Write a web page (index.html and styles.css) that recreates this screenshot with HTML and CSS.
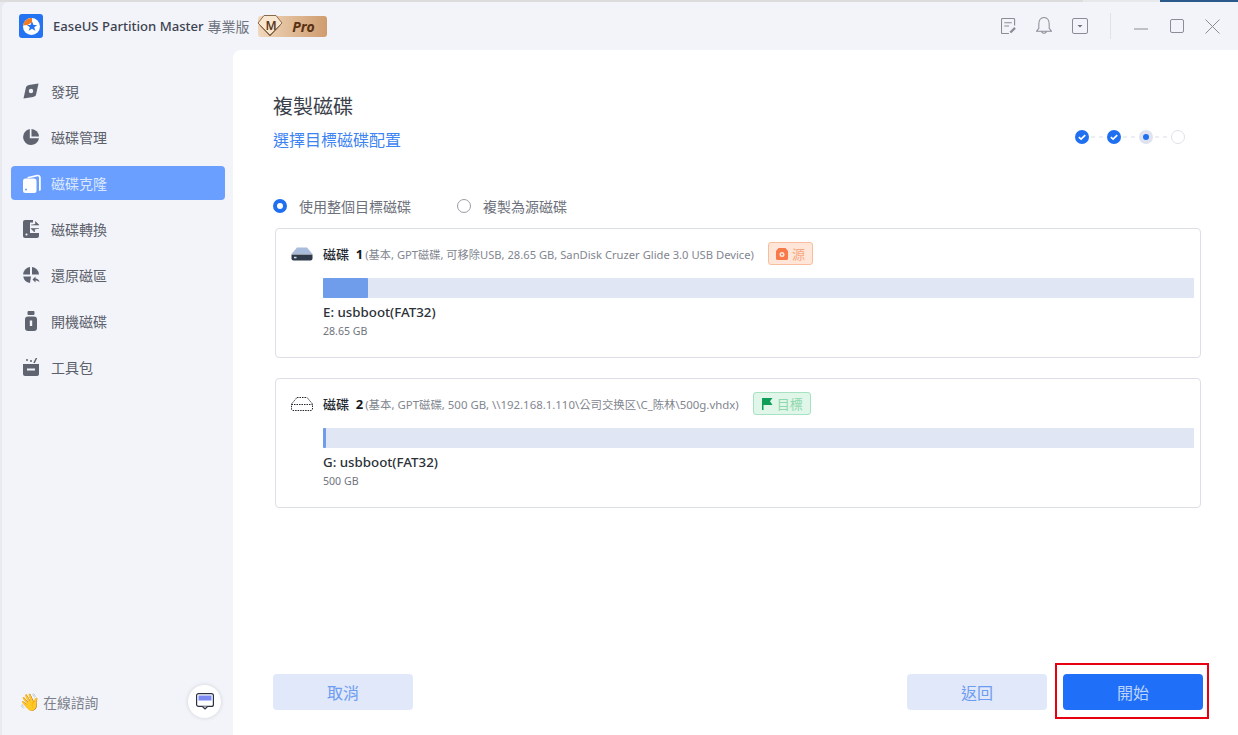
FILE: index.html
```html
<!DOCTYPE html>
<html lang="zh-Hant">
<head>
<meta charset="utf-8">
<title>EaseUS Partition Master</title>
<link rel="stylesheet" href="styles.css">
</head>
<body>
<div class="app">
  <div class="topstrip"><span class="strip-a"></span><span class="strip-b"></span><span class="strip-c"></span></div>
  <div class="shell">
  <header class="titlebar">
    <div class="brand">
      <svg class="logo" width="24" height="24" viewBox="0 0 24 24"><rect width="24" height="24" rx="3" fill="#2473f2"/><circle cx="12.500" cy="12.500" r="8.500" fill="#fff"/><path d="M13 4A8.500 8.500 0 0 0 4 11.500L8.500 11 13 8.500Z" fill="#f47b20"/><path d="M13 7.500l1.500 3.400h3.700l-3 2.300 1.100 3.600-3.300-2.100-3.300 2.100 1.100-3.600-3-2.300h3.700z" fill="#2473f2"/></svg>
      <span class="appname">EaseUS Partition Master</span>
      <span class="edition">專業版</span>
      <span class="pro">
        <svg class="pro-gem" width="26" height="24" viewBox="0 0 26 24"><path d="M7 2.500h12l6 7.500-12 12L1 10z" fill="#f8e6d0" stroke="#8a6a4c" stroke-width="1"/><path d="M3 12.500L13 23l10-10.500" fill="none" stroke="#8a6a4c" stroke-width="1"/></svg>
        <span class="pro-m">M</span>
        <span class="pro-text">Pro</span>
      </span>
    </div>
    <div class="winctl">
      <svg width="15" height="16" viewBox="0 0 16 17" fill="none" stroke="#8a8d96" stroke-width="1.200"><path d="M14.500 8V1.500a1 1 0 0 0-1-1h-12a1 1 0 0 0-1 1v14a1 1 0 0 0 1 1h7"/><path d="M3.500 5h8M3.500 8.500h5"/><path d="M10 15.500l5-5" stroke-width="2.400"/></svg>
      <svg class="bell" width="16" height="20" viewBox="0 0 17 20" fill="none" stroke="#8a8d96" stroke-width="1.100"><path d="M8.500 1C5 1 3 4 3 8v4.500L.6 15.500h15.800L14 12.500V8c0-4-2-7-5.500-7z"/><path d="M6 15.500c0 2.800 5 2.800 5 0"/></svg>
      <svg class="drop" width="16" height="16" viewBox="0 0 16 16"><rect x=".5" y=".5" width="15" height="15" rx="1.500" fill="none" stroke="#8a8d96"/><path d="M5.500 7h5L8 9.500z" fill="#70737c"/></svg>
      <span class="sep"></span>
      <svg class="min" width="14" height="2" viewBox="0 0 14 2"><path d="M0 1h14" stroke="#8a8d96" stroke-width="1"/></svg>
      <svg class="max" width="14" height="14" viewBox="0 0 14 14"><rect x=".5" y=".5" width="13" height="13" rx="1.500" fill="none" stroke="#8a8d96"/></svg>
      <svg class="close" width="15" height="15" viewBox="0 0 15 15"><path d="M.5.500l14 14M14.500.500l-14 14" stroke="#8a8d96" stroke-width="1"/></svg>
    </div>
  </header>
  <div class="body">
    <nav class="sidebar">
      <ul class="nav">
        <li class="nav-item">
          <svg class="nav-icon" width="16" height="16" viewBox="0 0 16 16"><path d="M15.500.500L6 2C4 2.400 3.300 3.300 2.800 5L.5 15.500 10 14c2-.4 2.700-1.300 3.200-3z" fill="#5f6470"/><circle cx="8" cy="8" r="2.200" fill="#f2f4f9"/></svg>
          <span>發現</span>
        </li>
        <li class="nav-item">
          <svg class="nav-icon" width="16" height="16" viewBox="0 0 16 16"><path d="M6.800.100V9.200H16A8 8 0 1 1 6.800.100z" fill="#5f6470"/><path d="M8.500 0A8 8 0 0 1 16 7.500H8.500z" fill="#5f6470"/></svg>
          <span>磁碟管理</span>
        </li>
        <li class="nav-item active">
          <svg class="nav-icon" width="18" height="19" viewBox="0 0 18 19"><rect y="4.500" width="13.500" height="14.500" rx="2.500" fill="#fff"/><path d="M4.500 3L14 .8c2-.4 3.800.8 3.800 2.700v12.700L16 17V4c0-1.300-.8-1.900-2-1.600L4.500 4.500z" fill="#fff"/><circle cx="3" cy="15.500" r="1" fill="#6b9fff"/></svg>
          <span>磁碟克隆</span>
        </li>
        <li class="nav-item">
          <svg class="nav-icon" width="16" height="18" viewBox="0 0 16 18"><path d="M2 0h8v2.500H7V13h9v3a2 2 0 0 1-2 2H2a2 2 0 0 1-2-2V2a2 2 0 0 1 2-2z" fill="#5f6470"/><path d="M8 5h8L12.500 1.500V4M16 8.500H8l3.500 3.500V9.500" fill="#5f6470" stroke="#5f6470" stroke-width=".6"/><circle cx="3.500" cy="14.500" r="1.100" fill="#f2f4f9"/></svg>
          <span>磁碟轉換</span>
        </li>
        <li class="nav-item">
          <svg class="nav-icon" width="17" height="16" viewBox="0 0 17 16"><path d="M7 0v7.500H.1A8 8 0 0 1 7 0z" fill="#5f6470"/><path d="M9 0a7.800 7.800 0 0 1 7 7.500H9z" fill="#5f6470"/><path d="M.2 9.500H8L7 16A8 8 0 0 1 .2 9.500z" fill="#5f6470"/><path d="M9.500 12.500l3-3v2c2 0 3.500 1 4 4-1-1.500-2.500-2-4-2v2z" fill="#5f6470"/></svg>
          <span>還原磁區</span>
        </li>
        <li class="nav-item">
          <svg class="nav-icon boot" width="12" height="20" viewBox="0 0 12 20"><rect x="2.500" width="7" height="4" rx="1" fill="#5f6470"/><rect y="5.500" width="12" height="14.500" rx="3" fill="#5f6470"/><rect x="4.800" y="9.500" width="2.400" height="5.500" fill="#f2f4f9"/></svg>
          <span>開機磁碟</span>
        </li>
        <li class="nav-item">
          <svg class="nav-icon" width="16" height="18" viewBox="0 0 16 18"><path d="M0 6h16v10a2 2 0 0 1-2 2H2a2 2 0 0 1-2-2z" fill="#5f6470"/><rect x="4" y="10.500" width="8" height="2" fill="#f2f4f9"/><path d="M11 5l2.500-5" stroke="#5f6470" stroke-width="1.500"/><circle cx="4" cy="2" r="1" fill="#5f6470"/><circle cx="8" cy="3" r="1" fill="#5f6470"/></svg>
          <span>工具包</span>
        </li>
      </ul>
      <div class="chat">
        <span class="wave">👋</span>
        <span class="chat-text">在線諮詢</span>
        <span class="chat-btn">
          <svg width="18" height="17" viewBox="0 0 18 17"><rect x=".6" y=".6" width="16.800" height="12.800" rx="2" fill="#fff" stroke="#2c3140" stroke-width="1.200"/><rect x="2.500" y="2.500" width="13" height="5" fill="#7d89f2"/><path d="M6.500 13.500L9 16l2.500-2.500" fill="#fff" stroke="#2c3140" stroke-width="1.200"/></svg>
        </span>
      </div>
    </nav>
    <main class="main">
      <h1 class="title">複製磁碟</h1>
      <div class="subrow">
        <span class="subtitle">選擇目標磁碟配置</span>
        <div class="steps">
          <span class="step done"><svg width="14" height="14" viewBox="0 0 14 14"><circle cx="7" cy="7" r="7" fill="#1f6ff0"/><path d="M3.800 7.200l2.300 2 4.100-4" fill="none" stroke="#fff" stroke-width="1.700"/></svg></span>
          <span class="dash"></span>
          <span class="step done"><svg width="14" height="14" viewBox="0 0 14 14"><circle cx="7" cy="7" r="7" fill="#1f6ff0"/><path d="M3.800 7.200l2.300 2 4.100-4" fill="none" stroke="#fff" stroke-width="1.700"/></svg></span>
          <span class="dash"></span>
          <span class="step"><svg width="14" height="14" viewBox="0 0 14 14"><circle cx="7" cy="7" r="7" fill="#dfe3ef"/><circle cx="7" cy="7" r="3" fill="#1f6ff0"/></svg></span>
          <span class="dash"></span>
          <span class="step"><svg width="14" height="14" viewBox="0 0 14 14"><circle cx="7" cy="7" r="6.500" fill="#fff" stroke="#dfe1e8"/></svg></span>
        </div>
      </div>
      <div class="options">
        <label class="option"><span class="radio on"></span><span>使用整個目標磁碟</span></label>
        <label class="option"><span class="radio"></span><span>複製為源磁碟</span></label>
      </div>
      <section class="disk">
        <div class="disk-head">
          <svg class="disk-icon" width="22" height="14" viewBox="0 0 22 14"><path d="M6 .500h10L21.500 7H.500z" fill="#a9bcdc"/><path d="M.500 7.500h21v4a2 2 0 0 1-2 2h-17a2 2 0 0 1-2-2z" fill="#2f3b4b"/><rect x="3" y="9.800" width="2.500" height="1.500" fill="#cfe0f0"/></svg>
          <span class="disk-name">磁碟&nbsp;&nbsp;<b>1</b></span>
          <span class="disk-info">(基本, GPT磁碟, 可移除USB, 28.65 GB, SanDisk Cruzer Glide 3.0 USB Device)</span>
          <span class="tag src">
            <svg width="12" height="12" viewBox="0 0 12 12"><path d="M2.500 0h7L12 3v7.500a1.500 1.500 0 0 1-1.500 1.500h-9A1.500 1.500 0 0 1 0 10.500V3z" fill="#f8794a"/><circle cx="6" cy="6.500" r="2.500" fill="#fde7db"/><circle cx="6" cy="6.500" r="1" fill="#f8794a"/></svg>
            <span>源</span>
          </span>
        </div>
        <div class="bar"><div class="bar-fill" style="width:45px"></div></div>
        <div class="vol-name">E: usbboot(FAT32)</div>
        <div class="vol-size">28.65 GB</div>
      </section>
      <section class="disk">
        <div class="disk-head">
          <svg class="disk-icon" width="22" height="14" viewBox="0 0 22 14" fill="none" stroke="#23272f" stroke-width="1" stroke-dasharray="1.500 1"><path d="M6 .500h10L21.500 7v5a1.500 1.500 0 0 1-1.500 1.500H2A1.500 1.500 0 0 1 .500 12V7z"/><path d="M.500 7.500h21"/></svg>
          <span class="disk-name">磁碟&nbsp;&nbsp;<b>2</b></span>
          <span class="disk-info long">(基本, GPT磁碟, 500 GB, \\192.168.1.110\公司交换区\C_陈林\500g.vhdx)</span>
          <span class="tag dst">
            <svg width="12" height="12" viewBox="0 0 12 12"><path d="M1 0h10.500L9 3.200 11.500 7H2.500v5H1z" fill="#0f9d58"/></svg>
            <span>目標</span>
          </span>
        </div>
        <div class="bar"><div class="bar-fill" style="width:3px"></div></div>
        <div class="vol-name">G: usbboot(FAT32)</div>
        <div class="vol-size">500 GB</div>
      </section>
      <footer class="actions">
        <button class="btn ghost">取消</button>
        <div class="actions-right">
          <button class="btn ghost">返回</button>
          <span class="highlight"><button class="btn primary">開始</button></span>
        </div>
      </footer>
    </main>
  </div>
  </div>
</div>
</body>
</html>
```
FILE: styles.css
```css
* { box-sizing: border-box; }
html, body { margin: 0; padding: 0; height: 100%; }
body {
  font-family: "Noto Sans", "Noto Sans CJK TC", sans-serif;
  color: #3a3f4a;
  background: #e8eaef;
  overflow: hidden;
}
.app { width: 1238px; height: 735px; display: flex; flex-direction: column; padding-left: 2px; }
.topstrip { height: 2px; display: flex; flex: none; margin-left: -2px; }
.strip-a { width: 1083px; background: #dcdcdc; }
.strip-b { width: 77px; background: #e6e8ea; }
.strip-c { flex: 1; background: #2a5a8c; }
.shell { flex: 1; min-height: 0; display: flex; flex-direction: column; background: #f2f4f9; border-top-left-radius: 6px; }
.titlebar { height: 48px; flex: none; display: flex; align-items: center; justify-content: space-between; }
.brand { display: flex; align-items: center; padding-left: 17px; }
.appname { margin-left: 10px; font-size: 13.100px; font-weight: 500; color: #3c4250; }
.edition { margin-left: 4px; font-size: 14px; color: #70747f; }
.pro { position: relative; margin-left: 8px; width: 69px; height: 21px; display: flex; align-items: center; justify-content: flex-end; background: linear-gradient(90deg, #f0d8bd, #cf9c6e); border-radius: 3px; }
.pro-gem { position: absolute; left: -1px; top: -3px; }
.pro-m { position: absolute; left: 8px; top: 1px; font-size: 12px; font-weight: 600; line-height: 18px; color: #5a3a1e; }
.pro-text { margin-right: 12px; font-size: 14px; font-weight: 700; font-style: italic; color: #5a3213; }
.winctl { display: flex; align-items: center; padding-right: 18px; }
.bell { margin-left: 20px; }
.drop { margin-left: 20px; }
.sep { width: 1px; height: 26px; margin-left: 22px; background: #e0e2e8; }
.min { margin-left: 23px; margin-top: 6px; }
.max { margin-left: 22px; }
.close { margin-left: 21px; }
.body { flex: 1; display: flex; min-height: 0; }
.sidebar { width: 231px; flex: none; display: flex; flex-direction: column; justify-content: space-between; padding: 24px 8px 0 9px; }
.nav { list-style: none; margin: 0; padding: 0; display: flex; flex-direction: column; gap: 12px; }
.nav-item { height: 34px; display: flex; align-items: center; padding-left: 12px; border-radius: 4px; font-size: 14px; color: #5c606b; position: relative; }
.nav-item span { position: absolute; left: 40px; }
.nav-icon.boot { margin-left: 2px; }
.nav-item.active { background: #6b9fff; color: #dce8ff; }
.chat { display: flex; align-items: center; height: 34px; margin-bottom: 16px; padding-left: 8px; position: relative; }
.wave { font-family: "Noto Color Emoji", "DejaVu Sans", sans-serif; font-size: 17px; line-height: 1; color: #f0b53c; }
.chat-text { margin-left: 3px; font-size: 13.800px; color: #7c808a; }
.chat-btn { position: absolute; right: 4px; top: 0; width: 33px; height: 33px; display: flex; align-items: center; justify-content: center; background: #fff; border-radius: 50%; box-shadow: 0 0 4px rgba(0,0,0,.14); }
.main { flex: 1; background: #fff; border-top-left-radius: 8px; padding: 43px 37px 25px 40px; display: flex; flex-direction: column; min-width: 0; }
.title { margin: 0; font-size: 20px; font-weight: 400; line-height: 28px; color: #3a3f4a; }
.subrow { display: flex; align-items: center; justify-content: space-between; margin-top: 4px; height: 28px; }
.subtitle { font-size: 16px; color: #3d83f2; }
.steps { display: flex; align-items: center; margin-top: -4px; margin-right: 16px; }
.step { display: flex; width: 14px; height: 14px; }
.dash { width: 18px; height: 2px; background: repeating-linear-gradient(90deg, transparent 0 2px, #eceef3 2px 6px, transparent 6px 8px); }
.options { display: flex; margin-top: 40px; height: 26px; align-items: center; gap: 46px; }
.option { display: flex; align-items: center; font-size: 14px; color: #6d717b; gap: 12px; }
.radio { width: 14px; height: 14px; border-radius: 50%; border: 1px solid #9a9da6; background: #fff; }
.radio.on { border: 4px solid #1f6ff0; }
.disk { margin-top: 20px; margin-left: 2px; height: 130px; width: 926px; border: 1px solid #dcdfe6; border-radius: 4px; padding: 0 6px 0 47px; position: relative; flex: none; }
.options + .disk { margin-top: 9px; }
.disk-head { height: 49px; display: flex; align-items: center; }
.disk-icon { position: absolute; left: 15px; top: 18px; }
.disk-name { font-size: 13px; font-weight: 500; color: #23272f; }
.disk-name b { font-weight: 700; color: #14171c; }
.disk-info { margin-left: 2px; font-size: 11.210px; color: #82868f; }
.disk-info.long { font-size: 11.420px; }
.tag { margin-left: 14px; height: 23px; display: inline-flex; align-items: center; gap: 4px; padding: 0 7px; border-radius: 3px; font-size: 13px; border: 1px solid; }
.tag.src { background: #ffe6d9; border-color: #f9bd9d; color: #f5a880; }
.tag.dst { background: #dff6e8; border-color: #a7e3c2; color: #8fd8ae; }
.bar { height: 20px; background: #e0e6f3; }
.bar-fill { height: 100%; background: #6f9ceb; border-radius: 1px; }
.vol-name { margin-top: 4px; font-size: 13.300px; font-weight: 500; line-height: 20px; color: #2c3038; }
.vol-size { font-size: 10.600px; line-height: 16px; color: #70747e; margin-top: 1px; }
.actions { margin-top: auto; display: flex; justify-content: space-between; align-items: center; width: 930px; }
.actions-right { display: flex; align-items: center; gap: 16px; }
.btn { width: 140px; height: 36px; border: 0; border-radius: 4px; font-family: inherit; font-size: 16px; padding: 0; }
.btn.ghost { background: #e0e8fa; color: #6f9cf0; }
.btn.primary { background: #1f6ff8; color: #bcd4ff; }
.highlight { display: flex; margin: -11px -6px -9px -8px; padding: 9px 4px 7px 6px; border: 2px solid #e60012; position: relative; }
```
